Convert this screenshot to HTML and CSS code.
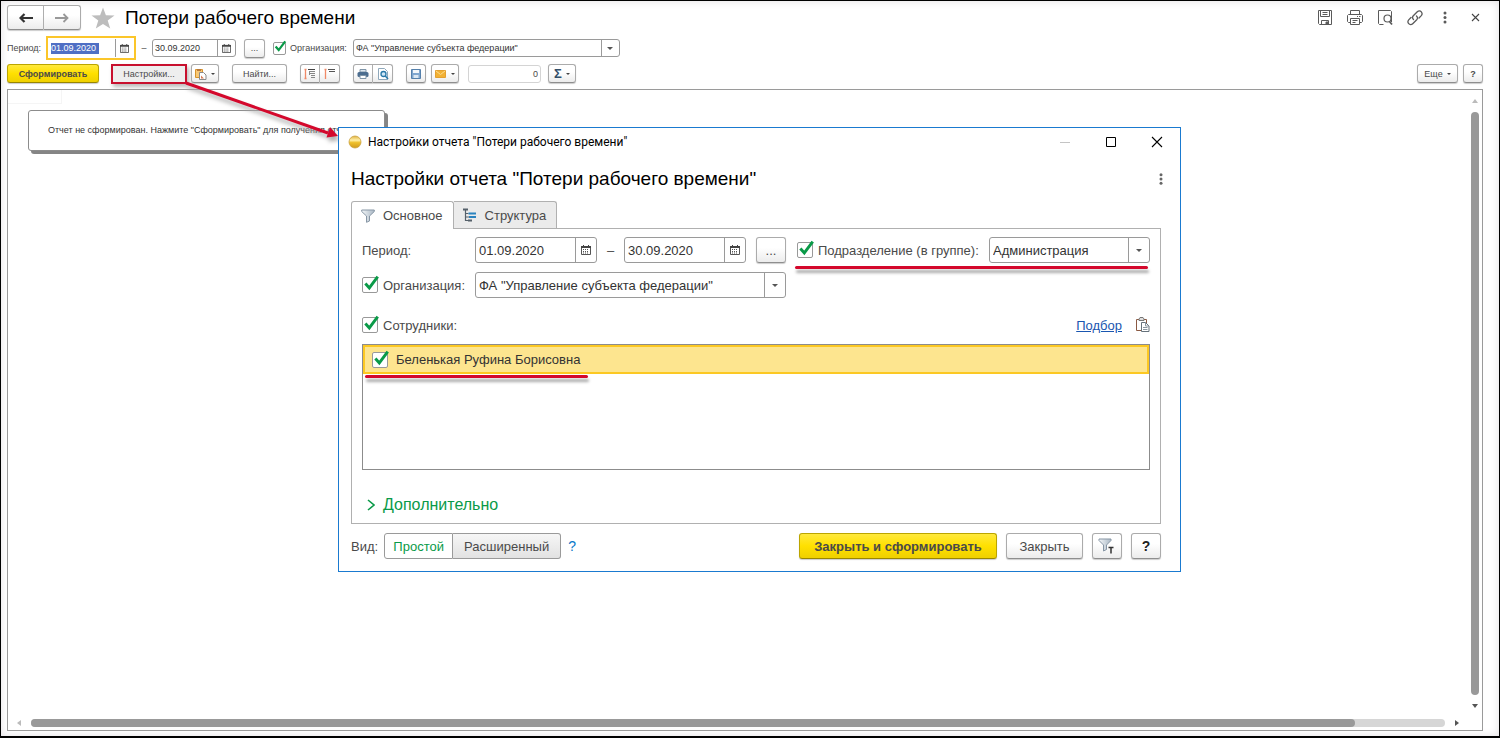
FILE: index.html
```html
<!DOCTYPE html>
<html lang="ru">
<head>
<meta charset="utf-8">
<title>Потери рабочего времени</title>
<link rel="stylesheet" href="styles.css">
</head>
<body>
<svg class="defs" aria-hidden="true">
  <defs>
    <linearGradient id="funnelFill" x1="0" y1="0" x2="1" y2="0">
      <stop offset="0" stop-color="#f4f7f9"/><stop offset="1" stop-color="#a9b7c4"/>
    </linearGradient>
    <linearGradient id="ballFill" x1="0" y1="0" x2="0" y2="1">
      <stop offset="0" stop-color="#e0b040"/><stop offset="0.35" stop-color="#fff0a8"/><stop offset="0.55" stop-color="#eec02c"/><stop offset="1" stop-color="#d09a1c"/>
    </linearGradient>
    <symbol id="calendar" viewBox="0 0 10 10">
      <path d="M0.500 1.500h9v8h-9z" fill="#fff" stroke="#555"/>
      <path d="M0 1h10v2H0zM2 0h1v2H2zM7 0h1v2H7z" fill="#444"/>
      <path d="M2 4.500h6M2 6.500h6M2 8h6" stroke="#555" stroke-dasharray="1 1"/>
    </symbol>
    <symbol id="funnel" viewBox="0 0 14 14">
      <path d="M0.700 1h12.600v1.500L8.500 7v5L5.500 13.300V7L0.700 2.500z" fill="url(#funnelFill)" stroke="#8796a5"/>
    </symbol>
  </defs>
</svg>

<main class="page">
  <header class="topbar">
    <div class="nav">
      <button class="btn nav-btn" aria-label="Назад"><svg width="14" height="10" viewBox="0 0 14 10"><path d="M14 5H3M5.500 1L1.500 5l4 4" fill="none" stroke="#333" stroke-width="2.200"/></svg></button>
      <button class="btn nav-btn" aria-label="Вперед"><svg width="14" height="10" viewBox="0 0 14 10"><path d="M0 5h12M8.500 1l4 4-4 4" fill="none" stroke="#999" stroke-width="1.800"/></svg></button>
    </div>
    <svg class="star" width="24" height="22" viewBox="0 0 24 22"><path d="M12 0.500l2.900 7.700 8.600 0.300-6.800 5 2.500 8L12 16.900l-7.200 4.600 2.500-8-6.800-5 8.600-0.300z" fill="#bdbdbd"/></svg>
    <h1 class="title">Потери рабочего времени</h1>
    <div class="window-tools">
      <svg width="16" height="16" viewBox="0 0 16 16" fill="none" stroke="#5a5a5a"><path d="M1.500 0.500h13v14h-12l-1-1z"/><path d="M3.500 0.500v6h9v-6M5.500 2.500h5M5.500 4.500h5M4.500 14.500v-4h7v4"/><path d="M9 12h2v2H9z" fill="#5a5a5a"/></svg>
      <svg width="16" height="16" viewBox="0 0 16 16" fill="none" stroke="#5a5a5a"><path d="M3.500 4.500v-4h9v4M3.500 12.500h-2l-1-1v-6l1-1h13l1 1v6l-1 1h-2M3.500 8.500h9v6h-9zM5.500 10.500h5M5.500 12.500h3M10 6.500h1M12 6.500h1.500"/></svg>
      <svg width="16" height="16" viewBox="0 0 16 16" fill="none" stroke="#5a5a5a"><path d="M6.500 14.500h-4l-1-1v-13h12l1 1V12"/><circle cx="10.500" cy="8.500" r="3.500" stroke-width="1.200"/><path d="M12.500 11.500l2.500 3" stroke-width="1.800"/></svg>
      <svg width="16" height="16" viewBox="0 0 16 16" fill="none" stroke="#5a5a5a" stroke-width="1.300"><path d="M6.500 9.500c-1.300-1.300-1.300-2.500-0.200-3.700l4-4c1.200-1.200 3-1.200 4 0s1 2.600 0 3.800L12 8M9.500 6c1.300 1.300 1.300 2.500 0.200 3.700l-4 4c-1.200 1.200-3 1.200-4 0s-1-2.600 0-3.800L4 7.500" stroke-linecap="round"/></svg>
      <svg width="16" height="16" viewBox="0 0 16 16" fill="#5a5a5a"><circle cx="8" cy="3" r="1.500"/><circle cx="8" cy="7.500" r="1.500"/><circle cx="8" cy="12" r="1.500"/></svg>
      <svg width="16" height="16" viewBox="0 0 16 16" fill="none" stroke="#444" stroke-width="1.100"><path d="M5 4l7 7M12 4l-7 7"/></svg>
    </div>
  </header>

  <section class="filters">
    <label for="from">Период:</label>
    <span class="field date focused"><input id="from" type="text" value="01.09.2020"><button aria-label="Выбрать дату"><svg width="9" height="9"><use href="#calendar"/></svg></button></span>
    <span class="dash">–</span>
    <span class="field date"><input type="text" value="30.09.2020" aria-label="Конец периода"><button aria-label="Выбрать дату"><svg width="9" height="9"><use href="#calendar"/></svg></button></span>
    <button class="btn dots">...</button>
    <label class="check"><input type="checkbox" checked><svg class="tick" viewBox="0 0 16 16"><path d="M3 7.500l3.500 4L14 1.500" fill="none" stroke="#0a9a48" stroke-width="2.600"/></svg>Организация:</label>
    <span class="field combo org"><select aria-label="Организация"><option>ФА "Управление субъекта федерации"</option></select></span>
  </section>

  <section class="toolbar">
    <button class="btn primary run">Сформировать</button>
    <button class="btn settings">Настройки...</button>
    <button class="btn variants" aria-label="Варианты"><svg width="12" height="12" viewBox="0 0 12 12"><path d="M0.500 1.500h7v8h-7z" fill="#f7c877" stroke="#d8942c"/><path d="M2 1h4v2H2z" fill="#b9783a"/><path d="M4.500 4.500h4l2.500 2.500v4.500H4.500z" fill="#fff" stroke="#8a8a8a"/><path d="M6 10.500v-3l3 3z" fill="#d77a55"/></svg><i class="caret"></i></button>
    <button class="btn find">Найти...</button>
    <div class="group">
      <button class="btn sq" aria-label="Развернуть группы"><svg width="12" height="12" viewBox="0 0 12 12"><path d="M1.500 1v10M0.500 1.500h2M0.500 10.500h2" fill="none" stroke="#f08a68" stroke-width="1.300"/><path d="M4 1.500h7" stroke="#444"/><path d="M5 3.500h6M6 5.500h5M7 7.500h4M7 9.500h4" stroke="#888"/><path d="M5.500 3v4" stroke="#888"/></svg></button>
      <button class="btn sq" aria-label="Свернуть группы"><svg width="12" height="12" viewBox="0 0 12 12"><path d="M1.500 1v10M0.500 1.500h2" fill="none" stroke="#f08a68" stroke-width="1.300"/><path d="M4 1.500h7M5 3.500h6" stroke="#555"/></svg></button>
    </div>
    <div class="group">
      <button class="btn sq" aria-label="Печать"><svg width="12" height="12" viewBox="0 0 12 12"><path d="M3 1.500h6V4H3z" fill="#dfe8f0" stroke="#7f95a8"/><rect x="0.500" y="4" width="11" height="5" rx="1.500" fill="#4c6d8f"/><path d="M3 7.500h6v3H3z" fill="#fff" stroke="#7f95a8"/></svg></button>
      <button class="btn sq" aria-label="Просмотр"><svg width="12" height="12" viewBox="0 0 12 12"><path d="M1.500 0.500h6l3 3v8h-9z" fill="#fff" stroke="#8fa8bb"/><circle cx="6.500" cy="6" r="2.500" fill="#cfe6f6" stroke="#2878a8" stroke-width="1.300"/><path d="M8.300 8l2.700 3" stroke="#2878a8" stroke-width="1.500"/></svg></button>
    </div>
    <button class="btn sq" aria-label="Сохранить"><svg width="12" height="12" viewBox="0 0 12 12"><path d="M1.500 1.500h9v9h-9z" fill="#7fa6cf" stroke="#5580ab"/><path d="M3 2h6v3H3z" fill="#f2f7fb"/><path d="M3.500 7h5v3h-5z" fill="#dbe8f3"/></svg></button>
    <button class="btn variants mail" aria-label="Отправить"><svg width="12" height="12" viewBox="0 0 12 12"><path d="M0.500 2.500h10v7h-10z" fill="#f2b134" stroke="#e3a030"/><path d="M1 3l4.500 3.500L10 3" fill="none" stroke="#fbdc90"/></svg><i class="caret"></i></button>
    <input class="count" type="text" value="0" aria-label="Сумма">
    <button class="btn variants sum"><b>Σ</b><i class="caret"></i></button>
    <span class="grow"></span>
    <button class="btn more">Еще<i class="caret"></i></button>
    <button class="btn sq help"><b>?</b></button>
  </section>

  <section class="report">
    <div class="sheet">
      <div class="cell"></div>
      <p class="notice">Отчет не сформирован. Нажмите "Сформировать" для получения отчета.</p>
    </div>
    <div class="vscroll"><i class="tri up"></i><span class="vthumb"></span><i class="tri down"></i></div>
    <div class="hscroll"><i class="tri left"></i><span class="htrack"><span class="hthumb"></span></span><i class="tri right"></i></div>
  </section>
</main>

<svg class="pointer" width="170" height="100" viewBox="0 0 170 100" aria-hidden="true">
  <g><path d="M6 23L148 73" stroke="#d4082c" stroke-width="3"/><path d="M158 76l-11.500 1.500 3.500-10.500z" fill="#d4082c"/></g>
</svg>

<section class="dialog" role="dialog" aria-labelledby="dlg-title">
  <div class="caption">
    <svg width="14" height="14" viewBox="0 0 14 14"><circle cx="7" cy="7" r="6" fill="url(#ballFill)" stroke="#c9a140" stroke-width="0.800"/></svg>
    <span class="caption-text">Настройки отчета "Потери рабочего времени"</span>
    <svg width="12" height="12" viewBox="0 0 12 12"><path d="M1 6.500h10" stroke="#c4c4c4"/></svg>
    <svg width="12" height="12" viewBox="0 0 12 12"><path d="M1.500 1.500h9v9h-9z" fill="none" stroke="#000"/></svg>
    <svg width="12" height="12" viewBox="0 0 12 12"><path d="M1 1l10 10M11 1L1 11" stroke="#000" stroke-width="1.100"/></svg>
  </div>
  <div class="heading">
    <h2 class="title" id="dlg-title">Настройки отчета "Потери рабочего времени"</h2>
    <svg width="4" height="12" viewBox="0 0 4 12" fill="#666"><circle cx="2" cy="1.800" r="1.500"/><circle cx="2" cy="6" r="1.500"/><circle cx="2" cy="10.200" r="1.500"/></svg>
  </div>
  <div class="tabs" role="tablist">
    <button class="tab active" role="tab" aria-selected="true"><svg width="14" height="14"><use href="#funnel"/></svg>Основное</button>
    <button class="tab" role="tab"><svg width="14" height="14" viewBox="0 0 14 14"><path d="M2.500 1v11.500h4M2.500 5.500h3M2.500 9h4" fill="none" stroke="#55606a" stroke-width="1.200"/><path d="M0 1.500h5M5 12.500h4" stroke="#55606a" stroke-width="2"/><path d="M5.500 5.500H13M6 9h7" stroke="#2b83bf" stroke-width="2"/></svg>Структура</button>
  </div>
  <div class="panel" role="tabpanel">
    <div class="row">
      <label class="period" for="dfrom">Период:</label>
      <span class="field date"><input id="dfrom" type="text" value="01.09.2020"><button aria-label="Выбрать дату"><svg width="10" height="10"><use href="#calendar"/></svg></button></span>
      <span class="dash">–</span>
      <span class="field date"><input type="text" value="30.09.2020" aria-label="Конец периода"><button aria-label="Выбрать дату"><svg width="10" height="10"><use href="#calendar"/></svg></button></span>
      <button class="btn dots">...</button>
      <span class="dept marked">
        <label class="check"><input type="checkbox" checked><svg class="tick" viewBox="0 0 16 16"><path d="M3 7.500l3.500 4L14 1.500" fill="none" stroke="#0a9a48" stroke-width="2.600"/></svg>Подразделение (в группе):</label>
        <span class="field combo"><select aria-label="Подразделение"><option>Администрация</option></select></span>
      </span>
    </div>
    <div class="row">
      <label class="check org-label"><input type="checkbox" checked><svg class="tick" viewBox="0 0 16 16"><path d="M3 7.500l3.500 4L14 1.500" fill="none" stroke="#0a9a48" stroke-width="2.600"/></svg>Организация:</label>
      <span class="field combo org"><select aria-label="Организация"><option>ФА "Управление субъекта федерации"</option></select></span>
    </div>
    <div class="row staff">
      <label class="check"><input type="checkbox" checked><svg class="tick" viewBox="0 0 16 16"><path d="M3 7.500l3.500 4L14 1.500" fill="none" stroke="#0a9a48" stroke-width="2.600"/></svg>Сотрудники:</label>
      <span class="grow"></span>
      <a class="pick" href="#">Подбор</a>
      <button class="paste" aria-label="Вставить"><svg width="15" height="16" viewBox="0 0 15 16"><path d="M1.500 2.500h10v11h-10z" fill="#fff" stroke="#8b5a43"/><path d="M4 2l1-1.500h3L9 2v1.500H4z" fill="#ddd" stroke="#777"/><path d="M6.500 5.500h4l3.500 3.500v5.500H6.500z" fill="#fff" stroke="#66727c"/><path d="M10.500 5.500V9H14M8 10.500h4.500M8 12.500h4.500" fill="none" stroke="#8a96a0"/></svg></button>
    </div>
    <div class="list">
      <div class="item">
        <label class="check marked"><input type="checkbox" checked><svg class="tick" viewBox="0 0 16 16"><path d="M3 7.500l3.500 4L14 1.500" fill="none" stroke="#0a9a48" stroke-width="2.600"/></svg>Беленькая Руфина Борисовна</label>
      </div>
    </div>
    <button class="extra"><svg width="8" height="12" viewBox="0 0 8 12"><path d="M1 1l6 5-6 5" fill="none" stroke="#0a9a48" stroke-width="1.600"/></svg>Дополнительно</button>
  </div>
  <footer class="foot">
    <span>Вид:</span>
    <div class="group">
      <button class="btn simple">Простой</button>
      <button class="btn full">Расширенный</button>
    </div>
    <a class="hint" href="#">?</a>
    <span class="grow"></span>
    <button class="btn primary apply">Закрыть и сформировать</button>
    <button class="btn close">Закрыть</button>
    <button class="btn tool" aria-label="Настройки отборов"><svg width="18" height="16" viewBox="0 0 18 16"><path d="M1 1h12v1.500L8.500 7v4.500L5.500 13V7L1 2.500z" fill="url(#funnelFill)" stroke="#8796a5"/><path d="M10.500 9.500h5M13 9v6.500" stroke="#333" stroke-width="1.500"/></svg></button>
    <button class="btn tool"><b>?</b></button>
  </footer>
</section>
</body>
</html>
```
FILE: styles.css
```css
* { box-sizing: border-box; }

body {
  margin: 0;
  position: relative;
  font-family: "Liberation Sans", Arial, sans-serif;
  font-size: 9px;
  color: #4a4a4a;
  background: #fff;
}

button, input, select {
  font: inherit;
  color: inherit;
  margin: 0;
  padding: 0;
  border: 0;
  background: none;
  outline: 0;
}

svg { display: block; flex: none; }
.defs { position: absolute; width: 0; height: 0; }
.grow { flex: 1; }

.page {
  display: flex;
  flex-direction: column;
  height: 100vh;
  min-height: 600px;
  padding: 4px 16px 5px 6px;
  border: 1px solid #000;
  border-bottom-width: 2px;
  box-shadow: inset 0 0 8px #e2dfe2;
}

/* Shared controls */
.btn {
  display: flex;
  align-items: center;
  justify-content: center;
  gap: 4px;
  height: 19px;
  white-space: nowrap;
  border: 1px solid #ababab;
  border-bottom-color: #8e8e8e;
  border-radius: 3px;
  background: linear-gradient(#fff 40%, #ececec);
  box-shadow: 0 1px 1px #ccc;
}

.primary {
  font-weight: bold;
  border-color: #bba500;
  border-bottom-color: #998600;
  background: linear-gradient(#ffe93c, #ffe000 50%, #efd000);
}

.caret {
  border: 2px solid transparent;
  border-top-color: #444;
  border-bottom: 0;
}

.group { display: flex; }
.group .btn:first-child { border-radius: 3px 0 0 3px; }
.group .btn:last-child { border-radius: 0 3px 3px 0; border-left: 0; }

.field {
  display: flex;
  height: 18px;
  color: #333;
  border: 1px solid #9a9a9a;
  border-radius: 3px;
  background: #fff;
}
.field input { flex: 1; min-width: 0; padding-left: 2px; }
.field button {
  display: flex;
  align-items: center;
  justify-content: center;
  width: 18px;
  border-left: 1px solid #9a9a9a;
}
.date { width: 84px; }

.combo { position: relative; }
.combo select { appearance: none; flex: 1; padding-left: 2px; }
.combo::before {
  content: "";
  position: absolute;
  top: 0;
  bottom: 0;
  right: 17px;
  border-left: 1px solid #9a9a9a;
}
.combo::after {
  content: "";
  position: absolute;
  top: calc(50% - 1px);
  right: 6px;
  border: 3px solid transparent;
  border-top-color: #555;
  border-bottom: 0;
}

.check {
  position: relative;
  display: flex;
  align-items: center;
  gap: 4px;
  white-space: nowrap;
}
.check input {
  appearance: none;
  width: 13px;
  height: 13px;
  border: 1px solid #999;
  border-radius: 2px;
  background: #fff;
}
.tick {
  position: absolute;
  left: 0;
  top: -2px;
  width: 14px;
  height: 14px;
  pointer-events: none;
}

/* Header */
.topbar { display: flex; align-items: center; height: 25px; }
.nav { display: flex; }
.nav-btn { width: 37px; height: 25px; }
.nav-btn:first-child { border-radius: 3px 0 0 3px; }
.nav-btn:last-child { border-radius: 0 3px 3px 0; border-left: 0; }
.star { margin: 0 10px; }
.title { margin: 0; font-size: 19px; font-weight: normal; color: #000; white-space: nowrap; }
.window-tools { display: flex; gap: 14px; margin-left: auto; }

/* Period and organisation */
.filters { display: flex; align-items: center; height: 24px; margin-top: 6px; }
.focused {
  width: 90px;
  height: 24px;
  margin-left: 5px;
  padding: 1px;
  border: 2px solid #fbc62a;
  border-radius: 0;
}
.focused input {
  align-self: center;
  flex: none;
  width: 48px;
  height: 11px;
  margin-left: 2px;
  padding: 0;
  color: #fff;
  background: #4f6fc4;
}
.focused button { margin-left: auto; }
.filters .dash { width: 16px; text-align: center; }
.filters .dots { width: 21px; margin: 0 8px; }
.filters .org { width: 267px; margin-left: 6px; }

/* Commands */
.toolbar { display: flex; align-items: center; height: 19px; margin-top: 4px; }
.run { width: 92px; }
.settings {
  width: 76px;
  height: 20px;
  margin: 0 4px 0 12px;
  border: 2px solid #c8102e;
  border-radius: 0;
  background: #eee;
  box-shadow: 2px 3px 4px #bbb;
}
.variants { width: 28px; }
.find { width: 55px; margin: 0 13px; }
.sq { width: 20px; }
.toolbar .group { margin-right: 13px; }
.mail { margin: 0 9px 0 5px; }
.count {
  width: 73px;
  height: 18px;
  padding-right: 2px;
  text-align: right;
  border: 1px solid #d4d4d4;
  border-radius: 3px;
}
.sum { margin-left: 7px; }
.sum b { font-size: 13px; color: #34506a; }
.more { width: 41px; margin-right: 5px; }

/* Report sheet */
.report {
  display: grid;
  grid-template: 1fr 15px / 1fr 16px;
  flex: 1;
  min-height: 0;
  margin-top: 6px;
  border: 1px solid #9a9a9a;
  background: #fff;
}
.sheet { overflow: hidden; }
.cell { width: 54px; height: 14px; border: 1px solid #f5f5f5; border-width: 0 1px 1px 0; }
.notice {
  width: 357px;
  margin: 6px 0 0 20px;
  padding: 14px 19px 15px;
  line-height: 10px;
  white-space: nowrap;
  overflow: hidden;
  color: #333;
  border: 1px solid #8c8c8c;
  border-radius: 3px;
  box-shadow: 3px 3px 0 #858585;
}
.vscroll {
  display: flex;
  flex-direction: column;
  align-items: center;
  justify-content: space-between;
  padding: 9px 0 7px 1px;
}
.vthumb { flex: 1; width: 8px; margin: 9px 0; border-radius: 4px; background: #999; }
.hscroll { display: flex; align-items: center; padding: 0 7px 0 9px; }
.htrack { flex: 1; margin: 0 10px; border-radius: 4px; background: #d6d6d6; }
.hthumb { display: block; width: 93.6%; height: 8px; border-radius: 4px; background: #999; }
.tri { border: 3px solid transparent; }
.up { border-top: 0; border-bottom: 4px solid #bbb; }
.down { border-bottom: 0; border-top: 4px solid #555; }
.left { border-left: 0; border-right: 4px solid #bbb; }
.right { border-right: 0; border-left: 4px solid #555; }

.pointer { position: absolute; left: 180px; top: 60px; pointer-events: none; }
.pointer g { filter: drop-shadow(2px 4px 2px #aaa); }

/* Settings window */
.dialog {
  position: absolute;
  left: 338px;
  top: 127px;
  width: 843px;
  padding: 0 19px 12px 12px;
  font-size: 13px;
  border: 1px solid #1a7ad0;
  background: #fff;
}
.caption { display: flex; align-items: center; gap: 34px; height: 28px; margin: 0 -2px 0 -3px; }
.caption-text {
  flex: 1;
  margin-left: -28px;
  font-family: Roboto, "Open Sans", sans-serif;
  font-size: 12px;
  color: #000;
}
.heading { display: flex; align-items: center; justify-content: space-between; height: 45px; }
.heading svg { margin-right: -2px; }

.tabs { display: flex; }
.tab {
  display: flex;
  align-items: center;
  gap: 8px;
  height: 27px;
  padding: 0 10px 0 9px;
  border: 1px solid #b0b0b0;
  border-left: 0;
  border-bottom: 0;
  border-radius: 0 3px 0 0;
  background: #ebebeb;
}
.tab.active {
  position: relative;
  z-index: 1;
  height: 28px;
  border-left: 1px solid #b0b0b0;
  border-radius: 3px 3px 0 0;
  background: #fff;
}
.panel { margin-top: -1px; padding: 8px 10px; border: 1px solid #b0b0b0; }

.row { display: flex; align-items: center; height: 26px; }
.row + .row { margin-top: 9px; }
.dialog .field { height: 26px; }
.dialog .field input { padding-left: 3px; }
.dialog .combo select { padding-left: 3px; }
.dialog .field button { width: 21px; }
.dialog .date { width: 122px; }
.dialog .combo::before { right: 20px; }
.dialog .combo::after { right: 7px; }
.dialog .check { gap: 5px; }
.dialog .check input { width: 16px; height: 16px; }
.dialog .tick { width: 18px; height: 18px; }
.dialog .btn { height: 26px; }
.period, .org-label { width: 113px; }
.row .dash { width: 27px; text-align: center; }
.row .dots { width: 30px; margin: 0 11px 0 10px; }
.dept { display: flex; flex: 1; align-items: center; justify-content: space-between; }
.dept .combo { width: 161px; }
.row .org { width: 311px; }
.panel .staff { margin-top: 14px; }
.pick { margin-right: 13px; color: #1a56b0; }

.marked { position: relative; }
.marked::after {
  content: "";
  position: absolute;
  left: -2px;
  right: 2px;
  top: 29px;
  height: 3px;
  border-radius: 2px;
  background: #d4082c;
  box-shadow: 1px 4px 3px #aaa;
}
.item .marked::after { left: -7px; right: -8px; top: 23px; }

.list { height: 126px; margin-top: 6px; border: 1px solid #8c8c8c; }
.item {
  display: flex;
  align-items: center;
  height: 29px;
  padding: 0 7px;
  color: #333;
  border: 2px solid #fcc822;
  background: #fde58f;
}
.dialog .item .check { gap: 8px; }

.extra {
  display: flex;
  align-items: center;
  gap: 8px;
  margin: 25px 0 0 5px;
  font-size: 16px;
  line-height: 20px;
  color: #0a9a48;
}

.foot { display: flex; align-items: center; margin-top: 9px; }
.foot .group { margin: 0 7px 0 6px; }
.foot .simple { width: 69px; color: #0a9a48; border-color: #9a9a9a; background: #fff; box-shadow: none; }
.foot .full { width: 108px; border-color: #9a9a9a; box-shadow: none; background: linear-gradient(#f6f6f6, #e2e2e2); }
.hint { font-size: 14px; color: #0a78c8; text-decoration: none; }
.apply { width: 198px; }
.close { width: 77px; margin: 0 9px; }
.tool { width: 30px; }
.tool + .tool { margin-left: 9px; }
.tool b { font-size: 14px; color: #222; }
```
